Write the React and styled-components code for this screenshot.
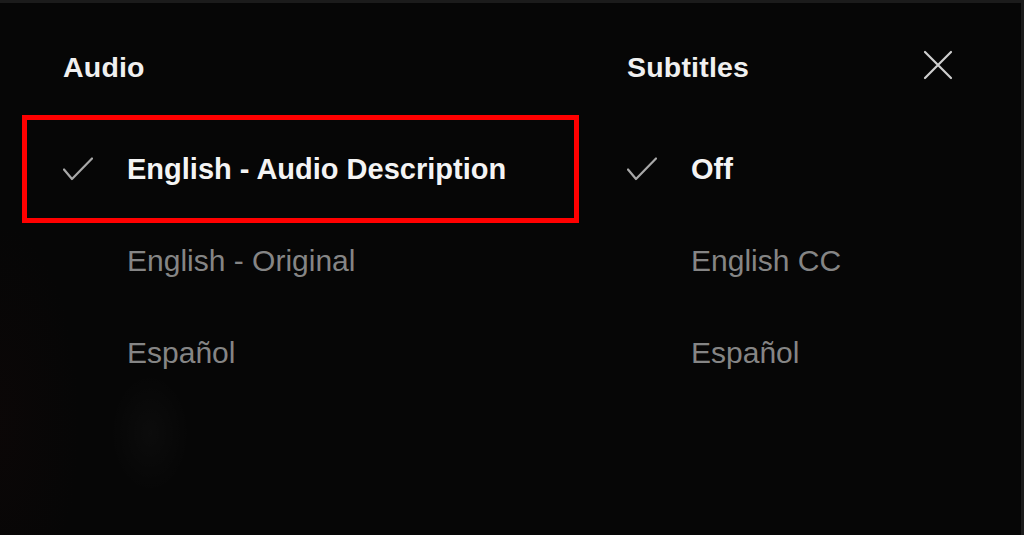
import styled, { createGlobalStyle } from 'styled-components';

const GlobalStyle = createGlobalStyle`
  html, body {
    margin: 0;
    padding: 0;
    background: #1b1b1b;
  }
  body {
    font-family: "Liberation Sans", Arial, sans-serif;
  }
`;

const audio = [
    { id: 1, label: 'English - Audio Description', selected: true, focused: true },
    { id: 2, label: 'English - Original' },
    { id: 3, label: 'Español' },
];

const subtitles = [
    { id: 1, label: 'Off', selected: true },
    { id: 2, label: 'English CC' },
    { id: 3, label: 'Español' },
];

const Screen = styled.div`
    height: 532px;
    margin-top: 3px;
    margin-right: 3px;
    box-sizing: border-box;
    padding-top: 47px;
    background:
        radial-gradient(ellipse 40px 60px at 150px 430px, rgba(255,255,255,0.025), transparent),
        radial-gradient(ellipse 80px 200px at 0px 420px, rgba(30,10,10,0.2), transparent),
        #060606;
    display: grid;
    grid-template-columns: 571px 1fr;
    overflow: hidden;
`;

const Column = styled.div`
    display: flex;
    flex-direction: column;
    padding-left: ${(p) => p.$inset}px;
`;

const HeaderRow = styled.div`
    display: flex;
    align-items: center;
    justify-content: space-between;
    padding-left: 33px;
    padding-right: 68px;
    height: 34px;
    margin-bottom: 39px;
`;

const Title = styled.h2`
    margin: 0;
    font-size: 28.5px;
    line-height: 34px;
    font-weight: 700;
    color: #f0f0f0;
    letter-spacing: 0.2px;
`;

const Close = styled.button`
    width: 30px;
    height: 30px;
    padding: 0;
    border: none;
    background: none;
    margin-top: -4px;
    display: flex;
    align-items: center;
    justify-content: center;
`;

const Row = styled.div`
    display: flex;
    align-items: center;
    height: 92px;
    padding-left: 33px;
    outline: ${(p) => (p.$focused ? '5px solid #ff0000' : 'none')};
    outline-offset: 3.5px;
`;

const CheckSlot = styled.span`
    width: 64px;
    flex: none;
    display: flex;
    align-items: center;
`;

const Label = styled.span`
    font-size: ${(p) => (p.$selected ? '29px' : '30px')};
    font-weight: ${(p) => (p.$selected ? 700 : 400)};
    color: ${(p) => (p.$selected ? '#f4f4f4' : '#858585')};
    white-space: nowrap;
`;

function Check() {
    return (
        <svg width="30" height="24" viewBox="0 0 30 24" fill="none">
            <path d="M1 12.5 L9 22 L29 1.5" stroke="#a8a8a8" strokeWidth="2.2" strokeLinecap="round" strokeLinejoin="round" />
        </svg>
    );
}

function Options({ items }) {
    return items.map((item) => (
        <Row key={item.id} $focused={item.focused}>
            <CheckSlot>{item.selected && <Check />}</CheckSlot>
            <Label $selected={item.selected}>{item.label}</Label>
        </Row>
    ));
}

export default function App() {
    return (
        <>
            <GlobalStyle />
            <Screen>
                <Column $inset={30}>
                    <HeaderRow>
                        <Title>Audio</Title>
                    </HeaderRow>
                    <Options items={audio} />
                </Column>
                <Column $inset={23}>
                    <HeaderRow>
                        <Title>Subtitles</Title>
                        <Close aria-label="Close">
                            <svg width="30" height="30" viewBox="0 0 30 30" fill="none">
                                <path d="M2 2 L28 28 M28 2 L2 28" stroke="#cfcfcf" strokeWidth="2.2" strokeLinecap="round" />
                            </svg>
                        </Close>
                    </HeaderRow>
                    <Options items={subtitles} />
                </Column>
            </Screen>
        </>
    );
}
